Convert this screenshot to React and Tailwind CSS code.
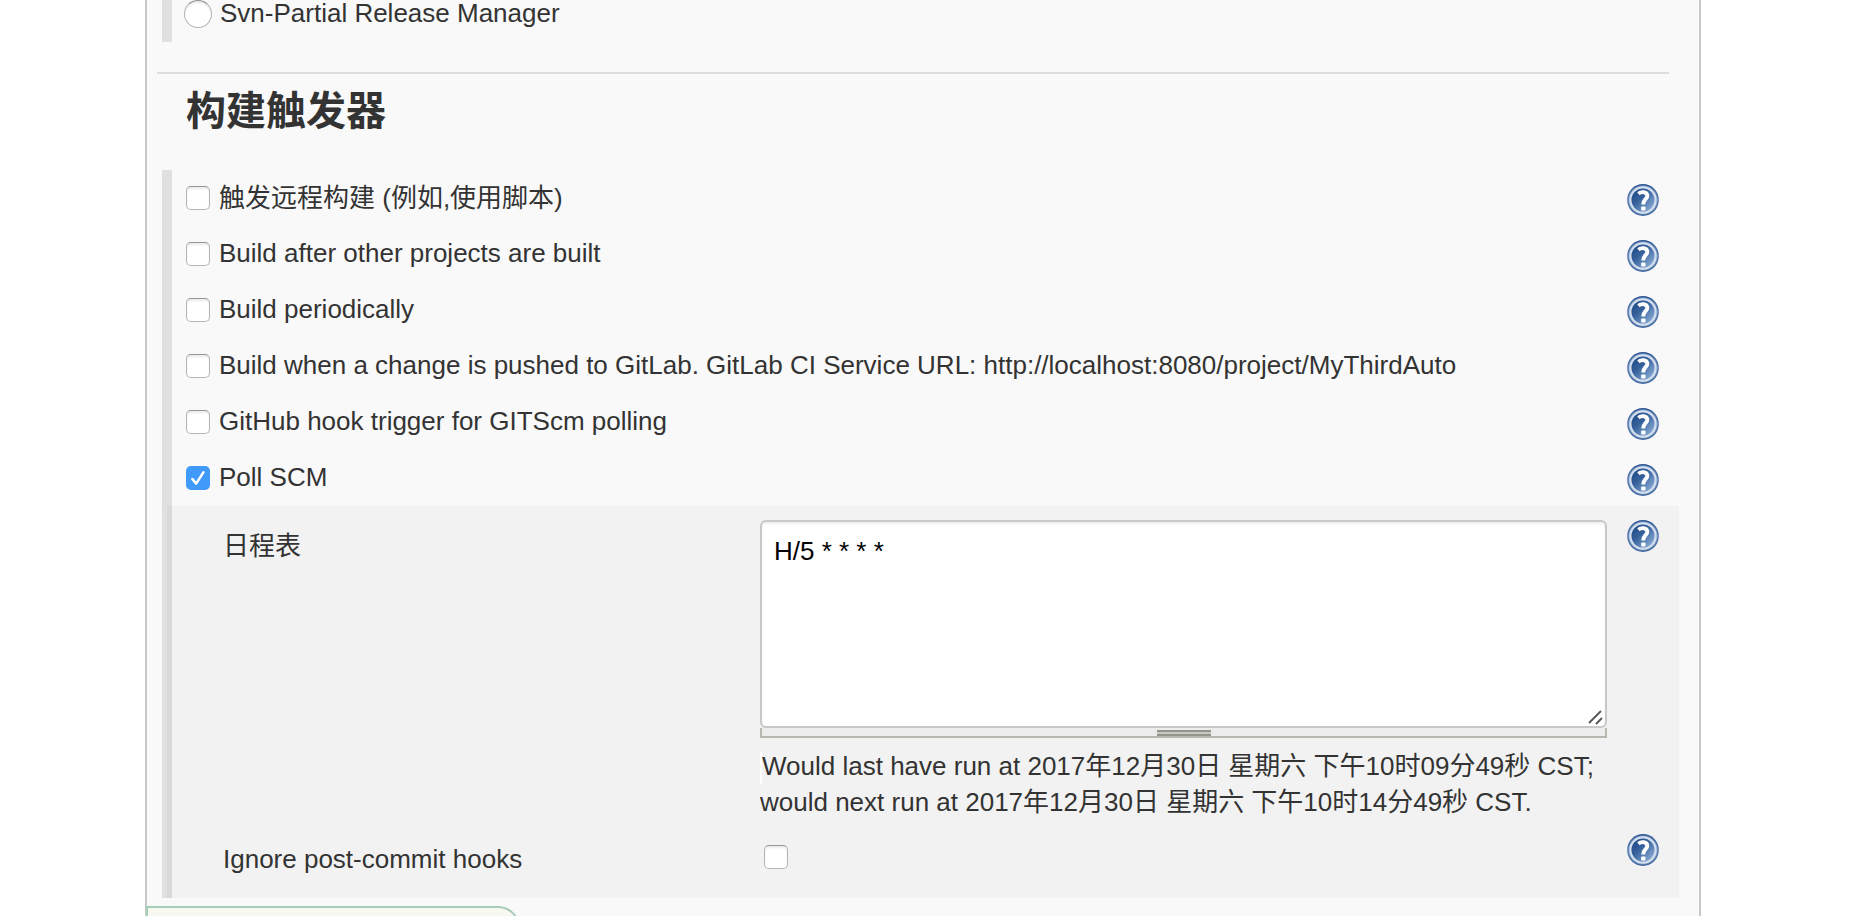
import React from "react";

function HelpIcon() {
  return (
    <svg viewBox="0 0 32 32" className="block h-8 w-8 shrink-0">
      <defs>
        <linearGradient id="help-fill" x1="0.1" y1="0.1" x2="0.9" y2="0.9">
          <stop offset="0" stopColor="#1f4886" />
          <stop offset="0.4" stopColor="#37619b" />
          <stop offset="1" stopColor="#8fb1da" />
        </linearGradient>
        <linearGradient id="help-ring" x1="0" y1="0" x2="0" y2="1">
          <stop offset="0" stopColor="#2d5691" />
          <stop offset="0.5" stopColor="#6486b5" />
          <stop offset="1" stopColor="#3d659d" />
        </linearGradient>
      </defs>
      <circle cx="16" cy="16" r="15.9" fill="url(#help-ring)" />
      <circle cx="16" cy="16" r="14.4" fill="#7d9ac3" />
      <circle cx="16" cy="16" r="12.6" fill="url(#help-fill)" stroke="#d3dfee" strokeWidth="2.2" />
      <path d="M11.4 9.7C14.2 7.2 20.3 7.5 20.3 11.9C20.3 15.4 16.2 15.2 16.2 20.6" fill="none" stroke="#fff" strokeWidth="3.9" />
      <rect x="14.1" y="22.6" width="4.4" height="3.9" rx="0.8" fill="#fff" />
    </svg>
  );
}

function Checkbox({ checked }) {
  if (checked) {
    return (
      <span className="block h-6 w-6 shrink-0 rounded-[5px] bg-[#409af9]">
        <svg viewBox="0 0 24 24" className="block h-6 w-6">
          <path d="M6.4 13.1L10.2 17.6L17.4 6.4" fill="none" stroke="#2777cc" strokeOpacity="0.5" strokeWidth="2.4" strokeLinecap="round" strokeLinejoin="round" transform="translate(0 1)" />
          <path d="M6.4 13.1L10.2 17.6L17.4 6.4" fill="none" stroke="#fff" strokeWidth="2.6" strokeLinecap="round" strokeLinejoin="round" />
        </svg>
      </span>
    );
  }
  return (
    <span className="block h-6 w-6 shrink-0 rounded-[5px] border border-[#b5b5b5] border-t-[#979797] bg-white shadow-[inset_0_2px_2px_#ececec]" />
  );
}

const triggers = [
  { label: "触发远程构建 (例如,使用脚本)", offset: "-mt-1" },
  { label: "Build after other projects are built", offset: "-mt-[5px]" },
  { label: "Build periodically", offset: "-mt-[5px]" },
  {
    label: "Build when a change is pushed to GitLab. GitLab CI Service URL: http://localhost:8080/project/MyThirdAuto",
    offset: "-mt-[5px]",
  },
  { label: "GitHub hook trigger for GITScm polling", offset: "-mt-[5px]" },
  { label: "Poll SCM", checked: true, offset: "-mt-[5px]" },
];

export default function App() {
  return (
    <div className="flex h-[916px] w-[1876px] overflow-hidden bg-white pl-[145px] font-['Liberation_Sans','Noto_Sans_CJK_SC',sans-serif] text-[26px] leading-9 text-[#333]">
      <main className="flex h-[916px] w-[1556px] flex-col border-x-2 border-[#c8c8c8] bg-[#f9f9f9]">
        <div className="ml-[15px] flex h-[42px] shrink-0 items-start border-l-[10px] border-[#e0e0e0] pl-3">
          <span className="h-7 w-7 shrink-0 rounded-full border border-[#b5b5b5] border-t-[#8f8f8f] bg-white shadow-[inset_0_2px_2px_#ececec]" />
          <span className="ml-2 whitespace-nowrap leading-[26px]">Svn-Partial Release Manager</span>
        </div>

        <hr className="ml-[10px] mt-[30px] w-[1512px] shrink-0 border-0 border-t-2 border-[#dcdcdc]" />

        <h1 className="ml-[39px] mt-[7px] h-[60px] shrink-0 whitespace-nowrap text-[40px] font-bold leading-[60px]">构建触发器</h1>

        <section className="ml-[15px] mt-[29px] h-[728px] w-[1517px] shrink-0 bg-[linear-gradient(to_right,#e0e0e0_10px,transparent_10px)]">
          <ul className="h-[336px]">
            {triggers.map((t) => (
              <li key={t.label} className="flex h-14 items-start pl-6 pr-5 pt-[14px]">
                <span className="mt-[2px]">
                  <Checkbox checked={t.checked} />
                </span>
                <span className={"ml-[9px] flex-1 whitespace-nowrap " + t.offset}>{t.label}</span>
                <HelpIcon />
              </li>
            ))}
          </ul>

          <div className="ml-[5px] flex h-[392px] w-[1512px] flex-col bg-[linear-gradient(to_right,#d9d9d9_5px,#f2f2f2_5px)] pl-14 pr-5 pt-[14px]">
            <div className="flex h-[314px] items-start">
              <label className="mt-2 w-[537px] shrink-0">日程表</label>
              <div className="w-[847px] shrink-0">
                <div className="flex h-[208px] justify-between rounded-[6px] border-2 border-[#c8c8c8] bg-white pl-3 pt-[11px] text-black shadow-[inset_0_2px_2px_#f0f0f0]">
                  <span className="leading-9">H/5 * * * *</span>
                  <svg viewBox="0 0 16 16" className="mr-[2px] mb-[1px] h-4 w-4 self-end">
                    <path d="M2 14L14 2M9 15L15 9" fill="none" stroke="#555" strokeWidth="1.8" />
                  </svg>
                </div>
                <div className="flex h-[10px] justify-center border-2 border-t-0 border-[#b8b8b3] bg-[#ededed] pt-[2px]">
                  <span className="h-[6px] w-[54px] border-y-2 border-[#94948f] bg-[#cacac5]" />
                </div>
                <div className="mt-[10px] whitespace-nowrap">
                  <p className="flex h-9 items-start">
                    <span className="mt-1 h-8 w-[2px] bg-white" />
                    <span>Would last have run at 2017年12月30日 星期六 下午10时09分49秒 CST;</span>
                  </p>
                  <p className="h-9">would next run at 2017年12月30日 星期六 下午10时14分49秒 CST.</p>
                </div>
              </div>
              <span className="ml-5">
                <HelpIcon />
              </span>
            </div>
            <div className="flex items-start">
              <label className="mt-[7px] w-[541px] shrink-0">Ignore post-commit hooks</label>
              <span className="mt-[11px]">
                <Checkbox />
              </span>
              <span className="ml-auto">
                <HelpIcon />
              </span>
            </div>
          </div>
        </section>

        <div className="-ml-px mt-2 h-10 w-[374px] shrink-0 rounded-tr-[22px] border-2 border-[#a5cdb8] bg-[#f7f8ef]" />
      </main>
    </div>
  );
}
